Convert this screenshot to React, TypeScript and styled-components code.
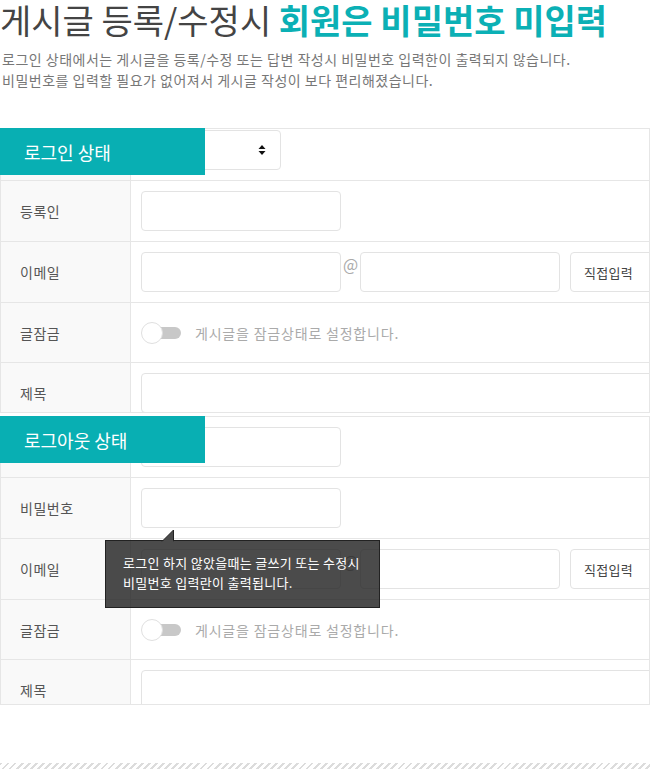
import styled, { createGlobalStyle } from 'styled-components'

const GlobalStyle = createGlobalStyle`
  html, body {
    margin: 0;
    padding: 0;
    background: #fff;
  }
  body {
    font-family: "Noto Sans CJK KR", "Noto Sans", sans-serif;
    color: #444;
  }
`

const Page = styled.div`
  width: 650px;
  height: 769px;
  overflow: hidden;
  display: flex;
  flex-direction: column;
`

const Title = styled.h1`
  margin: 0;
  font-size: 34px;
  line-height: 40px;
  font-weight: 400;
  color: #444;
  white-space: nowrap;
  em {
    font-style: normal;
    font-weight: 700;
    color: #0bb0b5;
  }
`

const Desc = styled.p`
  margin: 9px 0 0 2px;
  font-size: 14px;
  line-height: 21px;
  color: #777;
  letter-spacing: 0.5px;
  white-space: nowrap;
`

const Panel = styled.section<{ $gap: number }>`
  position: relative;
  margin-top: ${(p) => p.$gap}px;
`

const Clip = styled.div<{ $height: number; $crop: number }>`
  height: ${(p) => p.$height}px;
  box-sizing: border-box;
  border: 1px solid #e6e6e6;
  overflow: hidden;
  & > div {
    margin-top: -${(p) => p.$crop}px;
  }
`

const Table = styled.div`
  display: flex;
  flex-direction: column;
`

const Row = styled.div<{ $h?: number }>`
  display: flex;
  height: ${(p) => p.$h ?? 61}px;
  box-sizing: border-box;
  border-bottom: 1px solid #e6e6e6;
`

const Label = styled.div`
  flex: 0 0 130px;
  box-sizing: border-box;
  background: #f9f9f9;
  border-right: 1px solid #e6e6e6;
  padding-left: 19px;
  display: flex;
  align-items: center;
  font-size: 14px;
  letter-spacing: 0.5px;
  color: #555;
`

const Cell = styled.div`
  flex: 1;
  display: flex;
  align-items: center;
  padding-left: 10px;
  white-space: nowrap;
  min-width: 0;
`

const Input = styled.div<{ $w?: number }>`
  flex: 0 0 ${(p) => p.$w ?? 200}px;
  height: 40px;
  box-sizing: border-box;
  border: 1px solid #e3e3e3;
  border-radius: 4px;
  background: #fff;
`

const At = styled.span`
  flex: 0 0 19px;
  text-align: center;
  font-size: 16px;
  color: #aaa;
  align-self: flex-start;
  margin-top: 10px;
`

const SelectBox = styled.div<{ $w: number; $ml?: number }>`
  flex: 0 0 ${(p) => p.$w}px;
  margin-left: ${(p) => p.$ml ?? 0}px;
  height: 40px;
  box-sizing: border-box;
  border: 1px solid #e3e3e3;
  border-radius: 4px;
  background: #fff;
  display: flex;
  align-items: center;
  justify-content: space-between;
  padding: 0 14px 0 13px;
  font-size: 13px;
  letter-spacing: 0.3px;
  color: #444;
`

const Toggle = styled.div`
  position: relative;
  flex: 0 0 40px;
  height: 22px;
  margin-right: 14px;
  &::before {
    content: '';
    position: absolute;
    right: 0;
    top: 5px;
    width: 30px;
    height: 12px;
    border-radius: 6px;
    background: #c8c8c8;
  }
  &::after {
    content: '';
    position: absolute;
    left: 0;
    top: 0;
    width: 22px;
    height: 22px;
    box-sizing: border-box;
    border-radius: 50%;
    background: #fff;
    border: 1px solid #e0e0e0;
  }
`

const Hint = styled.span`
  font-size: 14px;
  letter-spacing: 0.8px;
  color: #aaa;
`

const Badge = styled.div`
  position: absolute;
  left: 0;
  top: 0;
  width: 205px;
  height: 47px;
  background: #08afb3;
  color: #fff;
  font-size: 18px;
  display: flex;
  align-items: center;
  padding-left: 24px;
  box-sizing: border-box;
`

const Tip = styled.div`
  position: absolute;
  left: 105px;
  top: 124px;
  width: 275px;
  height: 68px;
  box-sizing: border-box;
  background: rgba(30, 30, 30, 0.8);
  border: 1px solid #222;
  color: #fff;
  font-size: 13px;
  letter-spacing: 0.3px;
  line-height: 20px;
  padding: 12px 0 0 17px;
  white-space: nowrap;
  svg {
    position: absolute;
    left: 55px;
    top: -12px;
  }
`

const Stripe = styled.div`
  margin-top: auto;
  height: 6px;
  background: repeating-linear-gradient(135deg, #dcdcdc 0 2px, #fff 2px 5px);
`

const Arrows = () => (
  <svg width="8" height="12" viewBox="0 0 8 12">
    <path d="M4 1 L7.5 5 L0.5 5 Z M4 11 L7.5 7 L0.5 7 Z" fill="#111" />
  </svg>
)

const EmailRow = () => (
  <Row>
    <Label>이메일</Label>
    <Cell>
      <Input />
      <At>@</At>
      <Input />
      <SelectBox $w={110} $ml={10}>
        직접입력
      </SelectBox>
    </Cell>
  </Row>
)

const LockRow = () => (
  <Row $h={60}>
    <Label>글잠금</Label>
    <Cell>
      <Toggle />
      <Hint>게시글을 잠금상태로 설정합니다.</Hint>
    </Cell>
  </Row>
)

const SubjectRow = () => (
  <Row>
    <Label>제목</Label>
    <Cell>
      <Input $w={560} />
    </Cell>
  </Row>
)

export default function App() {
  return (
    <Page>
      <GlobalStyle />
      <Title>
        게시글 등록/수정시 <em>회원은 비밀번호 미입력</em>
      </Title>
      <Desc>
        로그인 상태에서는 게시글을 등록/수정 또는 답변 작성시 비밀번호 입력한이 출력되지 않습니다.
        <br />
        비밀번호를 입력할 필요가 없어져서 게시글 작성이 보다 편리해졌습니다.
      </Desc>

      <Panel $gap={37}>
        <Clip $height={285} $crop={9}>
          <Table>
            <Row>
              <Label />
              <Cell>
                <SelectBox $w={140}>
                  <span />
                  <Arrows />
                </SelectBox>
              </Cell>
            </Row>
            <Row>
              <Label>등록인</Label>
              <Cell>
                <Input />
              </Cell>
            </Row>
            <EmailRow />
            <LockRow />
            <SubjectRow />
          </Table>
        </Clip>
        <Badge>로그인 상태</Badge>
      </Panel>

      <Panel $gap={3}>
        <Clip $height={289} $crop={0}>
          <Table>
            <Row>
              <Label />
              <Cell>
                <Input />
              </Cell>
            </Row>
            <Row>
              <Label>비밀번호</Label>
              <Cell>
                <Input />
              </Cell>
            </Row>
            <EmailRow />
            <LockRow />
            <SubjectRow />
          </Table>
        </Clip>
        <Badge>로그아웃 상태</Badge>
        <Tip>
          <svg width="14" height="13" viewBox="0 0 14 13">
            <path d="M1 12.5 L12.5 1 L12.5 12.5" fill="#4b4b4b" stroke="#222" strokeWidth="1" />
            <rect x="1.5" y="12" width="11" height="2" fill="#4b4b4b" />
          </svg>
          로그인 하지 않았을때는 글쓰기 또는 수정시
          <br />
          비밀번호 입력란이 출력됩니다.
        </Tip>
      </Panel>

      <Stripe />
    </Page>
  )
}
